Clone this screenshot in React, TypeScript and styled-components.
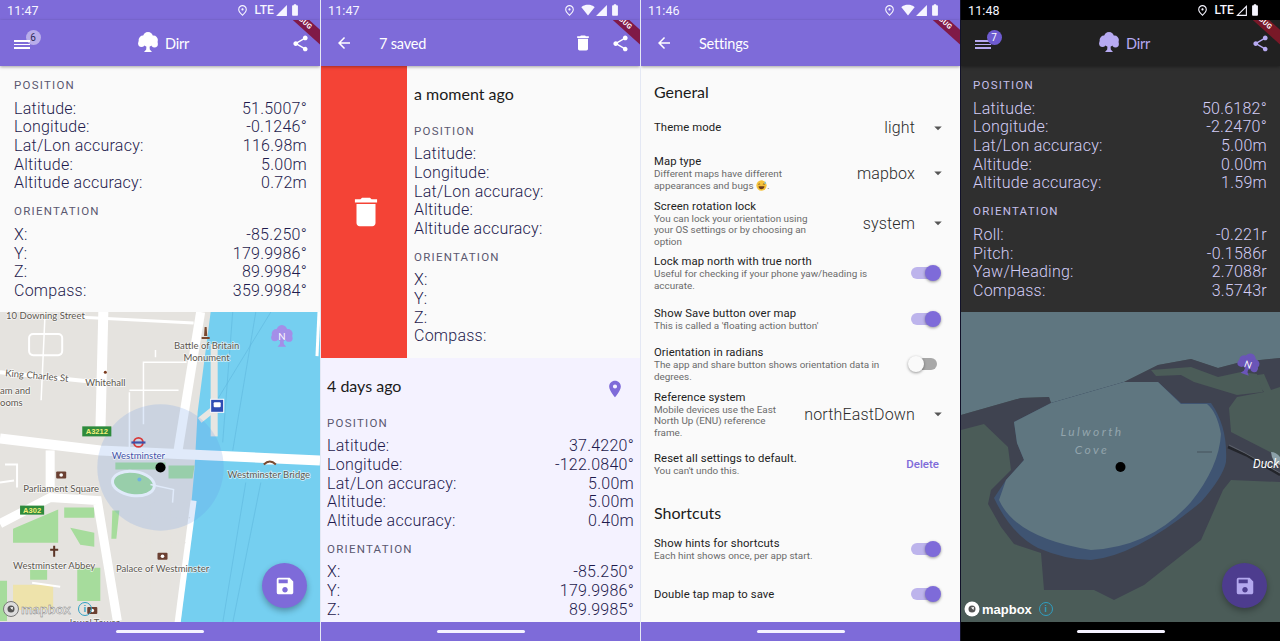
import React from 'react';
import styled, { createGlobalStyle, ThemeProvider } from 'styled-components';
import {
  MdArrowBack,
  MdArrowDropDown,
  MdBatteryStd,
  MdDelete,
  MdOutlinePlace,
  MdPlace,
  MdSave,
  MdShare,
  MdSignalCellular0Bar,
  MdSignalCellular4Bar,
  MdSignalWifi4Bar,
} from 'react-icons/md';

const light = {
  status: '#7e6bd9',
  bar: '#7e6bd9',
  barText: '#ffffff',
  page: '#fafafa',
  text: '#1e1a4d',
  label: '#5a5870',
  nav: '#7e6bd9',
  edge: '#e4e8f4',
  badgeBg: 'rgba(255,255,255,0.45)',
  badgeText: '#2e2a55',
  ribbon: 'rgba(128,20,60,0.92)',
  fab: '#7e6bd9',
  fabIcon: '#ffffff',
  blockLeft: '14px',
};

const dark = {
  status: '#000000',
  bar: '#212121',
  barText: '#b7aaf2',
  page: '#2f2f2f',
  text: '#d3cdf6',
  label: '#c5bfea',
  nav: '#000000',
  edge: '#12122a',
  badgeBg: '#6e5bd0',
  badgeText: '#ffffff',
  ribbon: 'rgba(125,24,40,0.95)',
  fab: '#4d3c8e',
  fabIcon: '#b4a8ee',
  blockLeft: '12px',
};

const GlobalStyle = createGlobalStyle`
  html, body {
    margin: 0;
    padding: 0;
    background: #fff;
    font-family: Roboto, "Liberation Sans", sans-serif;
  }
`;

const Screens = styled.div`
  display: grid;
  grid-template-columns: repeat(4, 320px);
  width: 1280px;
  height: 641px;
  overflow: hidden;
`;

const Phone = styled.section<{ $first?: boolean }>`
  position: relative;
  display: flex;
  flex-direction: column;
  height: 641px;
  overflow: hidden;
  background: ${(p) => p.theme.page};
  border-left: ${(p) => (p.$first ? 'none' : `1px solid ${p.theme.edge}`)};
`;

const StatusBar = styled.div`
  display: flex;
  align-items: center;
  justify-content: space-between;
  height: 20px;
  padding: 0 18px 0 7px;
  background: ${(p) => p.theme.status};
  color: #f6f5ff;
  font-size: 12.5px;
  letter-spacing: 0.1px;
`;

const StatusIcons = styled.div`
  display: flex;
  align-items: center;
  font-size: 12px;
  font-weight: 500;
  svg {
    display: block;
  }
`;

const Lte = styled.span`
  margin: 0 1px 0 6px;
`;

const AppBar = styled.header`
  position: relative;
  display: flex;
  align-items: center;
  justify-content: space-between;
  flex: none;
  height: 46px;
  padding: 0 10px 0 14px;
  background: ${(p) => p.theme.bar};
  color: ${(p) => p.theme.barText};
  box-shadow: 0 1px 3px rgba(0, 0, 0, 0.35);
  z-index: 2;
`;

const BarActions = styled.div`
  display: flex;
  align-items: center;
  gap: 18px;
`;

const BarLeft = styled.div`
  display: flex;
  align-items: center;
  gap: 26px;
`;

const BarTitle = styled.div`
  font-family: Lato, "Liberation Sans", sans-serif;
  font-size: 14.5px;
  letter-spacing: -0.2px;
`;

const Brand = styled.div`
  position: absolute;
  left: 136px;
  top: 11px;
  display: flex;
  align-items: center;
  gap: 5px;
`;

const MenuButton = styled.div`
  position: relative;
  display: flex;
  flex-direction: column;
  gap: 2px;
  width: 16px;
  margin-top: 3px;
`;

const MenuLine = styled.span`
  display: block;
  height: 1.6px;
  background: ${(p) => p.theme.barText};
`;

const Badge = styled.span`
  position: absolute;
  left: 11.5px;
  top: -10px;
  display: flex;
  align-items: center;
  justify-content: center;
  width: 15px;
  height: 15px;
  border-radius: 50%;
  background: ${(p) => p.theme.badgeBg};
  color: ${(p) => p.theme.badgeText};
  font-size: 10px;
`;

const RibbonClip = styled.div`
  position: absolute;
  top: 20px;
  right: 0;
  width: 34px;
  height: 30px;
  overflow: hidden;
  z-index: 5;
`;

const RibbonBand = styled.div`
  position: absolute;
  left: -15px;
  top: -1px;
  width: 70px;
  height: 11px;
  line-height: 11px;
  padding-right: 12px;
  box-sizing: border-box;
  text-align: center;
  transform: rotate(42deg);
  background: ${(p) => p.theme.ribbon};
  color: #fff;
  font-size: 7px;
  font-weight: 700;
  letter-spacing: 0.4px;
`;

const Body = styled.main`
  display: flex;
  flex-direction: column;
  flex: 1;
  min-height: 0;
  overflow: hidden;
`;

const DataBlock = styled.div`
  flex: none;
  padding: 12px 13px 11.5px ${(p) => p.theme.blockLeft};
`;

const SectionLabel = styled.div<{ $spaced?: boolean }>`
  height: 14px;
  line-height: 14px;
  margin: ${(p) => (p.$spaced ? '11px' : '0')} 0 7.6px;
  color: ${(p) => p.theme.label};
  font-size: 11.5px;
  letter-spacing: 1.25px;
`;

const DataRow = styled.div`
  display: flex;
  justify-content: space-between;
  height: 18.72px;
  line-height: 18.72px;
  color: ${(p) => p.theme.text};
  font-size: 16px;
  font-weight: 300;
  letter-spacing: 0.25px;
  white-space: nowrap;
`;

const SavedCard = styled.article<{ $tinted?: boolean }>`
  display: flex;
  flex: none;
  background: ${(p) => (p.$tinted ? '#f4f2ff' : 'transparent')};
`;

const DeleteReveal = styled.div`
  display: flex;
  flex: none;
  align-items: center;
  justify-content: center;
  box-sizing: border-box;
  width: 86px;
  padding-left: 4px;
  background: #f44336;
  color: #fff;
`;

const CardMain = styled.div<{ $inset?: string }>`
  flex: 1;
  min-width: 0;
  padding: 15px 6px 12px ${(p) => p.$inset ?? '7px'};
`;

const CardHead = styled.div`
  display: flex;
  align-items: center;
  justify-content: space-between;
  height: 24px;
  margin-bottom: 18.5px;
  padding-right: 9px;
  color: ${(p) => p.theme.barText};
`;

const CardTitle = styled.h2`
  margin: 0;
  color: #1b1b1b;
  font-family: Lato, "Liberation Sans", sans-serif;
  font-size: 16px;
  font-weight: 400;
`;

const PinIcon = styled(MdPlace)`
  color: #7e6bd9;
  margin-top: 8px;
`;

const Settings = styled.div`
  padding: 14px 20px 0 13px;
`;

const SettingsHead = styled.h2<{ $spaced?: boolean }>`
  height: 24px;
  line-height: 24px;
  margin: ${(p) => (p.$spaced ? '14px' : '0')} 0 1px;
  color: #1b1b1b;
  font-family: Lato, "Liberation Sans", sans-serif;
  font-size: 16px;
  font-weight: 400;
`;

const SettingRow = styled.div`
  display: flex;
  align-items: center;
  justify-content: space-between;
  box-sizing: border-box;
  min-height: 45.6px;
  padding: 3.5px 0;
`;

const SettingTitle = styled.div`
  line-height: 13px;
  color: #222;
  font-size: 11.3px;
  letter-spacing: 0.1px;
`;

const SettingHint = styled.div`
  line-height: 11.4px;
  color: #6a6a6a;
  font-size: 9.9px;
`;

const Dropdown = styled.div`
  display: flex;
  align-items: center;
  flex: none;
  gap: 14px;
  margin-right: -7px;
  color: #2a2a2a;
  font-size: 16px;
  font-weight: 300;
  letter-spacing: 0.15px;
  svg {
    color: #555;
  }
`;

const SwitchTrack = styled.div<{ $on?: boolean }>`
  position: relative;
  flex: none;
  width: 26px;
  height: 12px;
  margin-right: 3px;
  border-radius: 6px;
  background: ${(p) => (p.$on ? '#bdb4ec' : '#a8a8a8')};
`;

const SwitchThumb = styled.span<{ $on?: boolean }>`
  position: absolute;
  top: -2px;
  left: ${(p) => (p.$on ? '14px' : '-3px')};
  width: 16px;
  height: 16px;
  border-radius: 50%;
  background: ${(p) => (p.$on ? '#7e6bd9' : '#fafafa')};
  box-shadow: 0 1px 3px rgba(0, 0, 0, 0.4);
`;

const DeleteLink = styled.span`
  margin-right: 1px;
  color: #7e6bd9;
  font-size: 11.5px;
  font-weight: 500;
`;

const MapArea = styled.div`
  position: relative;
  flex: 1;
  min-height: 0;
  overflow: hidden;
`;

const MapCanvas = styled.svg`
  display: block;
  width: 100%;
  height: 100%;
`;

const MapLabel = styled.text<{ $color?: string }>`
  fill: ${(p) => p.$color ?? '#5d574f'};
  font-family: Lato, "Liberation Sans", sans-serif;
  font-size: 9.5px;
  paint-order: stroke;
  stroke: rgba(255, 255, 255, 0.7);
  stroke-width: 1.5px;
`;

const ShieldLabel = styled.text`
  fill: #f3ee7a;
  font-family: "Liberation Sans", sans-serif;
  font-size: 7.5px;
  font-weight: 700;
`;

const CoveLabel = styled.text`
  fill: #93a5ad;
  font-family: Lato, "Liberation Sans", sans-serif;
  font-size: 12px;
  font-style: italic;
  letter-spacing: 2.4px;
`;

const PlaceLabel = styled.text`
  fill: #fff;
  font-family: Roboto, "Liberation Sans", sans-serif;
  font-size: 12px;
  font-style: italic;
`;

const SaveFab = styled.div`
  position: absolute;
  right: 13px;
  bottom: 14px;
  display: flex;
  align-items: center;
  justify-content: center;
  width: 45px;
  height: 45px;
  border-radius: 50%;
  background: ${(p) => p.theme.fab};
  color: ${(p) => p.theme.fabIcon};
  box-shadow: 0 3px 6px rgba(0, 0, 0, 0.3);
`;

const Attribution = styled.div`
  position: absolute;
  left: 3px;
  bottom: 5px;
  display: flex;
  align-items: center;
  gap: 2px;
  color: #fff;
  font-family: "Liberation Sans", sans-serif;
  font-size: 13px;
  font-weight: 700;
`;

const AttributionName = styled.span<{ $faded?: boolean }>`
  color: ${(p) => (p.$faded ? '#e8e8e8' : '#fff')};
  -webkit-text-stroke: ${(p) => (p.$faded ? '0.4px #777' : '0')};
`;

const InfoDot = styled.span`
  display: flex;
  align-items: center;
  justify-content: center;
  box-sizing: border-box;
  width: 14px;
  height: 14px;
  margin-left: 5px;
  border: 1.5px solid #2f9fc2;
  border-radius: 50%;
  color: #2f9fc2;
  font-size: 9px;
`;

const NavBar = styled.footer`
  display: flex;
  justify-content: center;
  flex: none;
  height: 19px;
  padding-top: 8px;
  box-sizing: border-box;
  background: ${(p) => p.theme.nav};
  z-index: 2;
`;

const NavHandle = styled.span`
  width: 88px;
  height: 3px;
  border-radius: 2px;
  background: #f4f2ff;
`;

function TreeIconShape({ color }: { color: string }) {
  return (
    <g fill={color}>
      <circle cx="7" cy="9" r="4.4" />
      <circle cx="12" cy="6" r="5" />
      <circle cx="17.5" cy="9" r="4.4" />
      <circle cx="5.5" cy="12.5" r="3.4" />
      <circle cx="18.5" cy="13" r="3.4" />
      <circle cx="12" cy="11" r="5" />
      <path d="M10.6 13h2.8l.4 5.4 2.200 2.600H8l2.200-2.600z" />
    </g>
  );
}

const TreeIcon = () => (
  <svg width={24} height={24} viewBox="0 0 24 24">
    <TreeIconShape color="currentColor" />
  </svg>
);

const SweatEmoji = () => (
  <svg width="11" height="11" viewBox="0 0 12 12" style={{ verticalAlign: '-2px' }}>
    <circle cx="6" cy="6" r="5.6" fill="#f5c33b" />
    <path d="M2.8 6.8h6.4c0 2-1.4 3.2-3.2 3.2S2.8 8.800 2.8 6.800z" fill="#6b3b1c" />
    <path d="M2.5 4.800q1-1 2 0M7.500 4.800q1-1 2 0" stroke="#6b3b1c" fill="none" strokeWidth="0.8" />
    <path d="M10 1.500c1 1.300 1.200 2.500 0 2.800-1.200-.3-1-1.500 0-2.800z" fill="#6cc4ee" />
  </svg>
);

const Ribbon = () => (
  <RibbonClip>
    <RibbonBand>DEBUG</RibbonBand>
  </RibbonClip>
);

const Status = ({ time, lte, hollow }: { time: string; lte?: boolean; hollow?: boolean }) => (
  <StatusBar>
    <span>{time}</span>
    <StatusIcons>
      <MdOutlinePlace size={13} />
      {lte ? <Lte>LTE</Lte> : <MdSignalWifi4Bar size={14} style={{ marginLeft: 5 }} />}
      {hollow ? <MdSignalCellular0Bar size={13} /> : <MdSignalCellular4Bar size={13} />}
      <MdBatteryStd size={14} />
    </StatusIcons>
  </StatusBar>
);

const MenuBadge = ({ count }: { count: number }) => (
  <MenuButton>
    <MenuLine />
    <MenuLine />
    <MenuLine />
    <Badge>{count}</Badge>
  </MenuButton>
);

const Rows = ({ rows }: { rows: [string, string?][] }) => (
  <>
    {rows.map(([name, value]) => (
      <DataRow key={name}>
        <span>{name}</span>
        <span>{value}</span>
      </DataRow>
    ))}
  </>
);

const Fab = () => (
  <SaveFab>
    <MdSave size={22} />
  </SaveFab>
);

const LondonMap = () => (
  <MapCanvas viewBox="0 0 319 310" preserveAspectRatio="xMinYMin slice">
    <rect width="319" height="310" fill="#e5e3df" />
    <path d="M210 0L197 100L194 155L180 310H319V0z" fill="#75cff0" />
    <path d="M232 0L222 130M255 0L232 138M260 170L232 310M245 170L222 310M212 95L270 0" stroke="#5fb8de" strokeWidth="0.6" fill="none" />
    <path d="M318 0L316 44" stroke="#fff" strokeWidth="3" fill="none" />
    <rect x="210" y="32" width="7" height="92" fill="#e8e6e2" />
    <path d="M199 108L214 96" stroke="#e8e6e2" strokeWidth="6" />
    <path d="M13 216L58 197V230H13zM64 195h30v10H64zM70 215l24 5 0 14-14-2zM112 198h7l-3 28h-5zM77 255h23v33H77zM30 257h17v10H30zM0 268h7v40H0zM168 153h26l-2 13h-24zM115 150h50v7h-50z" fill="#a6dc9c" />
    <path d="M13 272h40v25H13z" fill="#eee3ab" />
    <g stroke="#fff" fill="none" strokeLinecap="butt">
      <path d="M103 0L100 121" strokeWidth="10" />
      <path d="M0 126L100 138L319 148" strokeWidth="10" />
      <path d="M200 0L177 141" strokeWidth="9" />
      <path d="M193 188L177 310" strokeWidth="6" />
      <path d="M50 138V178" strokeWidth="9" />
      <path d="M0 211L50 185L97 188L117 308" strokeWidth="9" />
      <path d="M0 60L97 70" strokeWidth="4" />
      <path d="M77 5L193 11" strokeWidth="3" />
      <rect x="29" y="22" width="33" height="21" rx="4" strokeWidth="2" />
      <path d="M143 112V50H186M129 78H178M155 38V45M45 0L41 88M129 80V135" strokeWidth="1.5" />
      <path d="M5 152H17V175M32 270L60 274M0 170L14 168" strokeWidth="2" />
    </g>
    <g fill="none" stroke="#e5e3df" strokeWidth="1" strokeDasharray="1.5 1.5">
      <path d="M130 190H190M140 205H190M130 230H185M150 180V300M170 180V300" />
    </g>
    <ellipse cx="133" cy="171" rx="21" ry="12" transform="rotate(8 133 171)" fill="#a6dc9c" stroke="#fff" strokeWidth="3" />
    <path d="M150 172L173 177L172 190" stroke="#fff" strokeWidth="1.5" fill="none" />
    <circle cx="139" cy="167" r="2" fill="#75b8e0" />
    <circle cx="160" cy="155" r="63" fill="rgba(100,150,230,0.2)" />

    <MapLabel x="6" y="7">10 Downing Street</MapLabel>
    <MapLabel x="206" y="37" textAnchor="middle">Battle of Britain</MapLabel>
    <MapLabel x="206" y="49" textAnchor="middle">Monument</MapLabel>
    <MapLabel x="5" y="64" transform="rotate(5 5 64)">King Charles St</MapLabel>
    <MapLabel x="105" y="74" textAnchor="middle">Whitehall</MapLabel>
    <MapLabel x="0" y="82">am and</MapLabel>
    <MapLabel x="0" y="94">ooms</MapLabel>
    <MapLabel x="138" y="147" textAnchor="middle" $color="#3f51a8">Westminster</MapLabel>
    <MapLabel x="268" y="165" textAnchor="middle">Westminster Bridge</MapLabel>
    <MapLabel x="61" y="179" textAnchor="middle">Parliament Square</MapLabel>
    <MapLabel x="54" y="256" textAnchor="middle">Westminster Abbey</MapLabel>
    <MapLabel x="162" y="259" textAnchor="middle">Palace of Westminster</MapLabel>
    <MapLabel x="68" y="313">Jewel Tower</MapLabel>

    <rect x="82" y="114" width="29" height="10" fill="#2e8b3c" />
    <ShieldLabel x="96.5" y="122" textAnchor="middle">A3212</ShieldLabel>
    <rect x="20" y="193" width="24" height="9" fill="#2e8b3c" />
    <ShieldLabel x="32" y="200.5" textAnchor="middle">A302</ShieldLabel>

    <circle cx="138" cy="130" r="4.5" fill="none" stroke="#d83a3a" strokeWidth="1.8" />
    <rect x="131" y="129" width="14" height="2.2" fill="#3f51a8" />
    <circle cx="105" cy="60" r="1.5" fill="#7a3b1e" />
    <path d="M54 233v11M50 237h8" stroke="#5b3426" strokeWidth="2" />
    <path d="M204 15h2l.6 9h-3.200zM201 25h8v2h-8z" fill="#7a4a30" />
    <rect x="210" y="87" width="13" height="13" fill="#2f4db3" stroke="#fff" />
    <rect x="213" y="90" width="7" height="5" rx="1" fill="#fff" />
    <path d="M263 152q6-6 12 0" stroke="#7a4a30" strokeWidth="2" fill="#fff" />
    {[[61, 162], [162, 243], [92, 297]].map(([x, y]) => (
      <g key={x}>
        <rect x={x - 5} y={y - 3} width="10" height="7" rx="1" fill="#6b4032" />
        <circle cx={x} cy={y + 0.5} r="1.8" fill="#fff" />
      </g>
    ))}
    <svg x="268" y="12" width="26" height="26" viewBox="0 0 24 24">
      <TreeIconShape color="#a48ee8" />
    </svg>
    <MapLabel x="281" y="28" textAnchor="middle" $color="#fff" style={{ stroke: 'none' }}>N</MapLabel>
    <circle cx="160" cy="155" r="5" fill="#000" />
  </MapCanvas>
);

const CoveMap = () => (
  <MapCanvas viewBox="0 0 319 310" preserveAspectRatio="xMinYMin slice">
    <rect width="319" height="310" fill="#5f7680" />
    <path d="M0 103L60 86L88 85L90 91L163 70L197 53L230 47L257 56L280 50L319 46V310H0z" fill="#4b5c58" />
    <path d="M0 103L60 86L88 85L90 91L163 70L197 53L230 47L257 56L280 50L319 46V75L310 78L303 62L290 64L303 80L276 85L268 96L270 120L319 145V170L270 168L262 178L240 228L183 273L153 288L133 278L83 278L80 241L53 232L40 215L27 192L30 178L50 158L47 135L23 112L0 118z" fill="#3f4350" />
    <path d="M190 58L230 55L257 65L280 60L296 62L302 80L276 83L233 70L220 63L195 64z" fill="#4b5c58" />
    <path d="M33 186Q50 222 77 236Q105 248 130 248Q175 244 240 190Q262 165 265 150Q267 115 250 91H220L197 70H163L90 91L53 110L56 131L63 148L45 168z" fill="#3f5472" />
    <path d="M53 110L56 131L63 148L45 168L38 188Q55 226 130 238Q190 235 230 190Q258 155 260 122Q256 100 246 92H220L197 70H163L90 91z" fill="#5f7680" />
    <path d="M236 140H251" stroke="#46525c" strokeWidth="1" />
    <path d="M267 135L285 143L319 163" stroke="#23252b" strokeWidth="2.5" fill="none" />
    <path d="M268 133L284 141L319 161" stroke="#6b7077" strokeWidth="0.7" fill="none" />
    <path d="M310 140q5 0 9 5v8q-8-2-9-13z" fill="#8ca0a8" />
    <CoveLabel x="131" y="124" textAnchor="middle">Lulworth</CoveLabel>
    <CoveLabel x="131" y="142" textAnchor="middle">Cove</CoveLabel>
    <PlaceLabel x="292" y="156">Duck</PlaceLabel>
    <g transform="rotate(20 287 53)">
      <svg x="274" y="40" width="26" height="26" viewBox="0 0 24 24">
        <TreeIconShape color="#6a55b8" />
      </svg>
      <MapLabel x="287" y="56" textAnchor="middle" $color="#fff" style={{ stroke: 'none' }}>N</MapLabel>
    </g>
    <circle cx="159.5" cy="155" r="5" fill="#000" />
  </MapCanvas>
);

const MapboxMark = ({ faded }: { faded?: boolean }) => (
  <Attribution>
    <svg width="16" height="16" viewBox="0 0 16 16">
      <circle cx="8" cy="8" r="7.5" fill={faded ? '#ddd' : '#fff'} stroke={faded ? '#777' : 'none'} />
      <circle cx="8" cy="8" r="3.5" fill="#555" />
      <path d="M7 6.5l3-.5-.5 3z" fill="#fff" />
    </svg>
    <AttributionName $faded={faded}>mapbox</AttributionName>
    <InfoDot>i</InfoDot>
  </Attribution>
);

const LiveDataScreen = () => (
  <Phone $first>
    <Status time="11:47" lte />
    <Ribbon />
    <AppBar>
      <MenuBadge count={6} />
      <Brand>
        <TreeIcon />
        <BarTitle>Dirr</BarTitle>
      </Brand>
      <MdShare size={19} />
    </AppBar>
    <Body>
      <DataBlock>
        <SectionLabel>POSITION</SectionLabel>
        <Rows
          rows={[
            ['Latitude:', '51.5007°'],
            ['Longitude:', '-0.1246°'],
            ['Lat/Lon accuracy:', '116.98m'],
            ['Altitude:', '5.00m'],
            ['Altitude accuracy:', '0.72m'],
          ]}
        />
        <SectionLabel $spaced>ORIENTATION</SectionLabel>
        <Rows
          rows={[
            ['X:', '-85.250°'],
            ['Y:', '179.9986°'],
            ['Z:', '89.9984°'],
            ['Compass:', '359.9984°'],
          ]}
        />
      </DataBlock>
      <MapArea>
        <LondonMap />
        <MapboxMark faded />
        <Fab />
      </MapArea>
    </Body>
    <NavBar>
      <NavHandle />
    </NavBar>
  </Phone>
);

const SavedScreen = () => (
  <Phone>
    <Status time="11:47" />
    <Ribbon />
    <AppBar>
      <BarLeft>
        <MdArrowBack size={18} />
        <BarTitle>7 saved</BarTitle>
      </BarLeft>
      <BarActions>
        <MdDelete size={20} />
        <MdShare size={19} />
      </BarActions>
    </AppBar>
    <Body>
      <SavedCard>
        <DeleteReveal>
          <MdDelete size={38} />
        </DeleteReveal>
        <CardMain>
          <CardHead>
            <CardTitle>a moment ago</CardTitle>
          </CardHead>
          <SectionLabel>POSITION</SectionLabel>
          <Rows rows={[['Latitude:'], ['Longitude:'], ['Lat/Lon accuracy:'], ['Altitude:'], ['Altitude accuracy:']]} />
          <SectionLabel $spaced>ORIENTATION</SectionLabel>
          <Rows rows={[['X:'], ['Y:'], ['Z:'], ['Compass:']]} />
        </CardMain>
      </SavedCard>
      <SavedCard $tinted>
        <CardMain $inset="6px">
          <CardHead>
            <CardTitle>4 days ago</CardTitle>
            <PinIcon size={20} />
          </CardHead>
          <SectionLabel>POSITION</SectionLabel>
          <Rows
            rows={[
              ['Latitude:', '37.4220°'],
              ['Longitude:', '-122.0840°'],
              ['Lat/Lon accuracy:', '5.00m'],
              ['Altitude:', '5.00m'],
              ['Altitude accuracy:', '0.40m'],
            ]}
          />
          <SectionLabel $spaced>ORIENTATION</SectionLabel>
          <Rows
            rows={[
              ['X:', '-85.250°'],
              ['Y:', '179.9986°'],
              ['Z:', '89.9985°'],
            ]}
          />
        </CardMain>
      </SavedCard>
    </Body>
    <NavBar>
      <NavHandle />
    </NavBar>
  </Phone>
);

const SettingsScreen = () => (
  <Phone>
    <Status time="11:46" />
    <Ribbon />
    <AppBar>
      <BarLeft>
        <MdArrowBack size={18} />
        <BarTitle>Settings</BarTitle>
      </BarLeft>
    </AppBar>
    <Body>
      <Settings>
        <SettingsHead>General</SettingsHead>
        <SettingRow>
          <SettingTitle>Theme mode</SettingTitle>
          <Dropdown>light<MdArrowDropDown size={18} /></Dropdown>
        </SettingRow>
        <SettingRow>
          <div>
            <SettingTitle>Map type</SettingTitle>
            <SettingHint>Different maps have different<br />appearances and bugs <SweatEmoji />.</SettingHint>
          </div>
          <Dropdown>mapbox<MdArrowDropDown size={18} /></Dropdown>
        </SettingRow>
        <SettingRow>
          <div>
            <SettingTitle>Screen rotation lock</SettingTitle>
            <SettingHint>You can lock your orientation using<br />your OS settings or by choosing an<br />option</SettingHint>
          </div>
          <Dropdown>system<MdArrowDropDown size={18} /></Dropdown>
        </SettingRow>
        <SettingRow>
          <div>
            <SettingTitle>Lock map north with true north</SettingTitle>
            <SettingHint>Useful for checking if your phone yaw/heading is<br />accurate.</SettingHint>
          </div>
          <SwitchTrack $on><SwitchThumb $on /></SwitchTrack>
        </SettingRow>
        <SettingRow>
          <div>
            <SettingTitle>Show Save button over map</SettingTitle>
            <SettingHint>This is called a 'floating action button'</SettingHint>
          </div>
          <SwitchTrack $on><SwitchThumb $on /></SwitchTrack>
        </SettingRow>
        <SettingRow>
          <div>
            <SettingTitle>Orientation in radians</SettingTitle>
            <SettingHint>The app and share button shows orientation data in<br />degrees.</SettingHint>
          </div>
          <SwitchTrack><SwitchThumb /></SwitchTrack>
        </SettingRow>
        <SettingRow>
          <div>
            <SettingTitle>Reference system</SettingTitle>
            <SettingHint>Mobile devices use the East<br />North Up (ENU) reference<br />frame.</SettingHint>
          </div>
          <Dropdown>northEastDown<MdArrowDropDown size={18} /></Dropdown>
        </SettingRow>
        <SettingRow>
          <div>
            <SettingTitle>Reset all settings to default.</SettingTitle>
            <SettingHint>You can't undo this.</SettingHint>
          </div>
          <DeleteLink>Delete</DeleteLink>
        </SettingRow>
        <SettingsHead $spaced>Shortcuts</SettingsHead>
        <SettingRow>
          <div>
            <SettingTitle>Show hints for shortcuts</SettingTitle>
            <SettingHint>Each hint shows once, per app start.</SettingHint>
          </div>
          <SwitchTrack $on><SwitchThumb $on /></SwitchTrack>
        </SettingRow>
        <SettingRow>
          <SettingTitle>Double tap map to save</SettingTitle>
          <SwitchTrack $on><SwitchThumb $on /></SwitchTrack>
        </SettingRow>
      </Settings>
    </Body>
    <NavBar>
      <NavHandle />
    </NavBar>
  </Phone>
);

const DarkScreen = () => (
  <Phone>
    <Status time="11:48" lte hollow />
    <Ribbon />
    <AppBar>
      <MenuBadge count={7} />
      <Brand>
        <TreeIcon />
        <BarTitle>Dirr</BarTitle>
      </Brand>
      <MdShare size={19} />
    </AppBar>
    <Body>
      <DataBlock>
        <SectionLabel>POSITION</SectionLabel>
        <Rows
          rows={[
            ['Latitude:', '50.6182°'],
            ['Longitude:', '-2.2470°'],
            ['Lat/Lon accuracy:', '5.00m'],
            ['Altitude:', '0.00m'],
            ['Altitude accuracy:', '1.59m'],
          ]}
        />
        <SectionLabel $spaced>ORIENTATION</SectionLabel>
        <Rows
          rows={[
            ['Roll:', '-0.221r'],
            ['Pitch:', '-0.1586r'],
            ['Yaw/Heading:', '2.7088r'],
            ['Compass:', '3.5743r'],
          ]}
        />
      </DataBlock>
      <MapArea>
        <CoveMap />
        <MapboxMark />
        <Fab />
      </MapArea>
    </Body>
    <NavBar>
      <NavHandle />
    </NavBar>
  </Phone>
);

export default function App() {
  return (
    <>
      <GlobalStyle />
      <Screens>
        <ThemeProvider theme={light}>
          <LiveDataScreen />
          <SavedScreen />
          <SettingsScreen />
        </ThemeProvider>
        <ThemeProvider theme={dark}>
          <DarkScreen />
        </ThemeProvider>
      </Screens>
    </>
  );
}
